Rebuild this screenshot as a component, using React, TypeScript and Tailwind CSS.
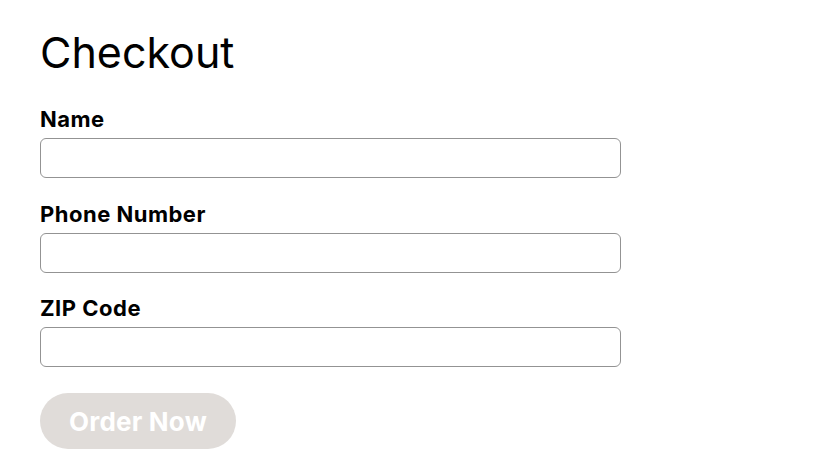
import React from 'react';

const fields = ['Name', 'Phone Number', 'ZIP Code'];

const App: React.FC = () => {
  return (
    <div className="min-h-screen bg-white px-10 pt-[26px]" style={{ fontFamily: 'Inter, "Liberation Sans", sans-serif' }}>
      <h1 className="text-[43px] leading-[52px] text-black">Checkout</h1>
      <div className="mt-[27px] flex w-[581px] flex-col">
        {fields.map((label, i) => (
          <div key={label} className={i > 0 ? 'mt-[21.5px]' : ''}>
            <label className="block text-[22px] font-bold leading-[28px] tracking-[0.5px] text-black">{label}</label>
            <input
              type="text"
              className="mt-[5px] block h-[40px] w-full rounded-[6px] border border-[#939393] bg-white px-3"
            />
          </div>
        ))}
      </div>
      <button
        disabled
        className="mt-[26px] h-[56px] w-[196px] rounded-full bg-[#e0dcd9] text-[26px] font-bold tracking-[0.2px] text-white"
      >
        Order Now
      </button>
    </div>
  );
};

export default App;
